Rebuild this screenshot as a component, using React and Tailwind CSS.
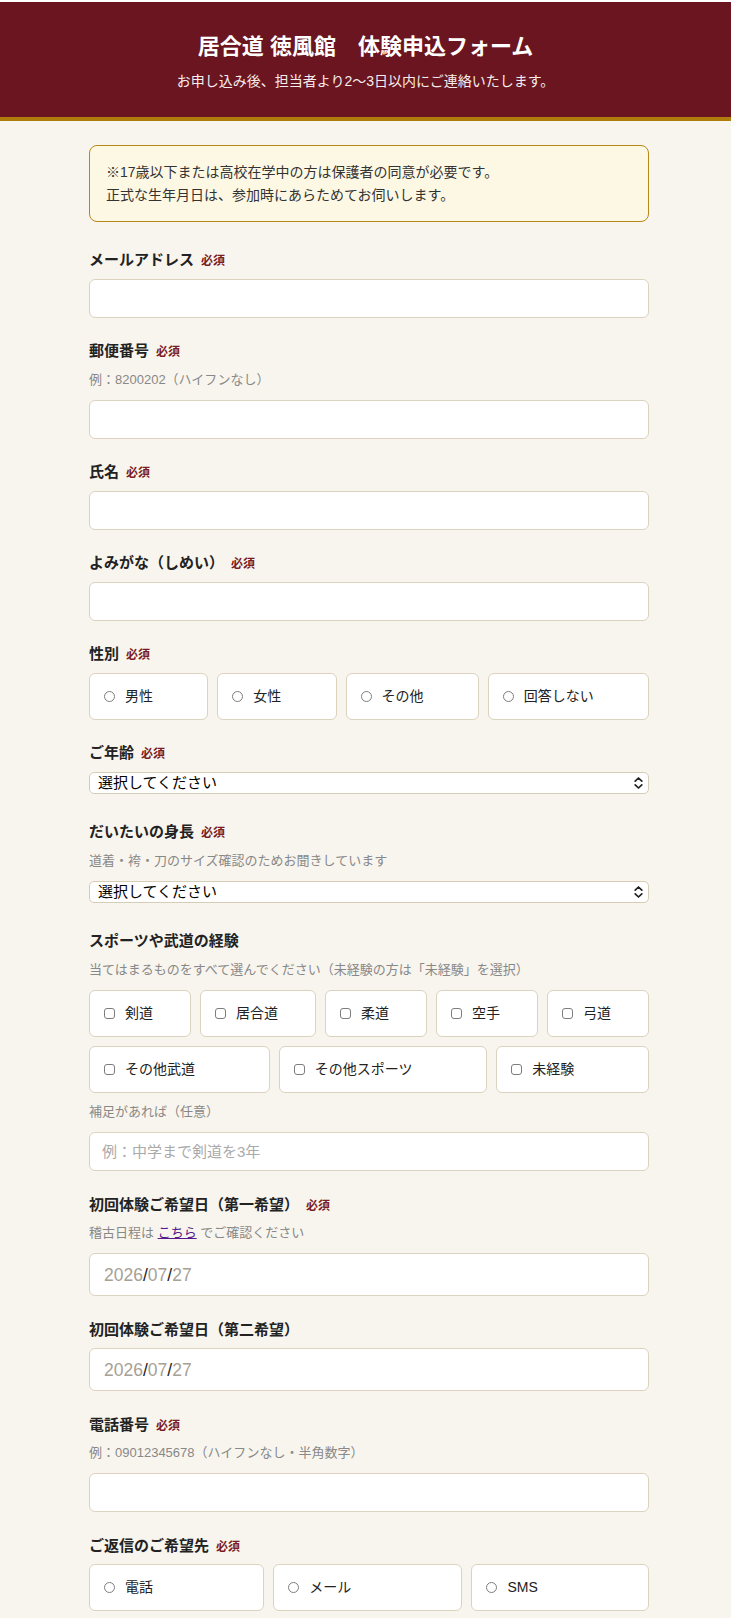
import React from "react";

function Required() {
  return <span className="ml-[7px] text-[12px] leading-none font-bold text-[#7a1b24]">必須</span>;
}

function Label({ children, required }) {
  return (
    <div className="mb-[6.5px] h-6 text-[15px] leading-6 font-bold text-[#222]">
      {children}
      {required && <Required />}
    </div>
  );
}

function Hint({ children }) {
  return <p className="mb-[10px] h-5 text-[13px] leading-5 text-[#888]">{children}</p>;
}

function TextInput({ placeholder, type = "text" }) {
  return (
    <input
      type={type}
      placeholder={placeholder}
      className="block h-[39px] w-full rounded-md border border-[#dcd3bf] bg-white px-3 text-[15px] text-[#222] outline-none placeholder:text-[#aaa]"
    />
  );
}

function Choice({ type, name, label }) {
  return (
    <label className="flex h-[47px] grow items-center gap-[10px] rounded-md border border-[#dcd3bf] bg-white px-[14px] text-[14px] text-[#222]">
      <input
        type={type}
        name={name}
        className={
          type === "radio"
            ? "h-[11px] w-[11px] shrink-0 appearance-none rounded-full border border-[#7d7d7d] bg-white"
            : "h-[11px] w-[11px] shrink-0 appearance-none rounded-[3px] border border-[#7d7d7d] bg-white"
        }
      />
      <span className="whitespace-nowrap">{label}</span>
    </label>
  );
}

function Choices({ type, name, items }) {
  return (
    <div className="flex flex-wrap gap-[9px]">
      {items.map((it) => (
        <Choice key={it} type={type} name={name} label={it} />
      ))}
    </div>
  );
}

function SelectBox() {
  return (
    <div className="relative mt-[2.5px] mb-[5px]">
      <select className="block h-[22px] w-full appearance-none rounded-[5px] border border-[#d6cdb6] bg-white pl-2 text-[15px] leading-none text-black outline-none">
        <option>選択してください</option>
      </select>
      <svg
        className="pointer-events-none absolute right-[6px] top-1/2 -translate-y-1/2"
        width="9"
        height="14"
        viewBox="0 0 9 14"
        fill="none"
        stroke="#222"
        strokeWidth="1.7"
        strokeLinecap="round"
        strokeLinejoin="round"
      >
        <path d="M1.2 5.2 4.5 2l3.3 3.2M1.2 8.8 4.5 12l3.3-3.2" />
      </svg>
    </div>
  );
}

function DateBox() {
  return (
    <div className="flex h-[43px] w-full items-center rounded-md border border-[#dcd3bf] bg-white px-[14px] text-[17.5px] text-[#a7a195]">
      <span>2026</span>
      <span className="text-[#222]">/</span>
      <span>07</span>
      <span className="text-[#222]">/</span>
      <span>27</span>
    </div>
  );
}

function Field({ children }) {
  return <div className="pb-[21.5px]">{children}</div>;
}

export default function App() {
  return (
    <div className="min-h-screen bg-[#f8f5ee] pb-10 font-[family-name:'Liberation_Sans','Noto_Sans_CJK_JP',sans-serif]">
      <header className="h-[121px] border-t-2 border-b-4 border-t-white border-b-[#ae7d0c] bg-[#6b1520] pt-[29px] text-center text-white">
        <h1 className="mb-2 h-[31px] text-[22px] leading-[31px] font-bold">居合道 徳風館　体験申込フォーム</h1>
        <p className="text-[14px] leading-[22.4px] text-[#f5eded]">
          お申し込み後、担当者より2〜3日以内にご連絡いたします。
        </p>
      </header>

      <main className="ml-[89px] w-[560px] pt-6">
        <div className="mb-[26px] rounded-lg border border-[#b8871a] bg-[#fdf8e3] px-4 py-[15px] text-[14px] leading-[22.6px] text-[#333]">
          <p>※17歳以下または高校在学中の方は保護者の同意が必要です。</p>
          <p>正式な生年月日は、参加時にあらためてお伺いします。</p>
        </div>

        <Field>
          <Label required>メールアドレス</Label>
          <TextInput type="email" />
        </Field>

        <Field>
          <Label required>郵便番号</Label>
          <Hint>例：8200202（ハイフンなし）</Hint>
          <TextInput />
        </Field>

        <Field>
          <Label required>氏名</Label>
          <TextInput />
        </Field>

        <Field>
          <Label required>よみがな（しめい）</Label>
          <TextInput />
        </Field>

        <Field>
          <Label required>性別</Label>
          <Choices type="radio" name="gender" items={["男性", "女性", "その他", "回答しない"]} />
        </Field>

        <Field>
          <Label required>ご年齢</Label>
          <SelectBox />
        </Field>

        <Field>
          <Label required>だいたいの身長</Label>
          <Hint>道着・袴・刀のサイズ確認のためお聞きしています</Hint>
          <SelectBox />
        </Field>

        <Field>
          <Label>スポーツや武道の経験</Label>
          <Hint>当てはまるものをすべて選んでください（未経験の方は「未経験」を選択）</Hint>
          <Choices
            type="checkbox"
            name="experience"
            items={["剣道", "居合道", "柔道", "空手", "弓道", "その他武道", "その他スポーツ", "未経験"]}
          />
          <p className="mt-[9.5px] mb-[10px] h-5 text-[13px] leading-5 text-[#888]">補足があれば（任意）</p>
          <TextInput placeholder="例：中学まで剣道を3年" />
        </Field>

        <Field>
          <Label required>初回体験ご希望日（第一希望）</Label>
          <Hint>
            稽古日程は{" "}
            <a href="#schedule" className="text-[#551a8b] underline">
              こちら
            </a>{" "}
            でご確認ください
          </Hint>
          <DateBox />
        </Field>

        <Field>
          <Label>初回体験ご希望日（第二希望）</Label>
          <DateBox />
        </Field>

        <Field>
          <Label required>電話番号</Label>
          <Hint>例：09012345678（ハイフンなし・半角数字）</Hint>
          <TextInput type="tel" />
        </Field>

        <Field>
          <Label required>ご返信のご希望先</Label>
          <Choices type="radio" name="reply" items={["電話", "メール", "SMS"]} />
        </Field>
      </main>
    </div>
  );
}
